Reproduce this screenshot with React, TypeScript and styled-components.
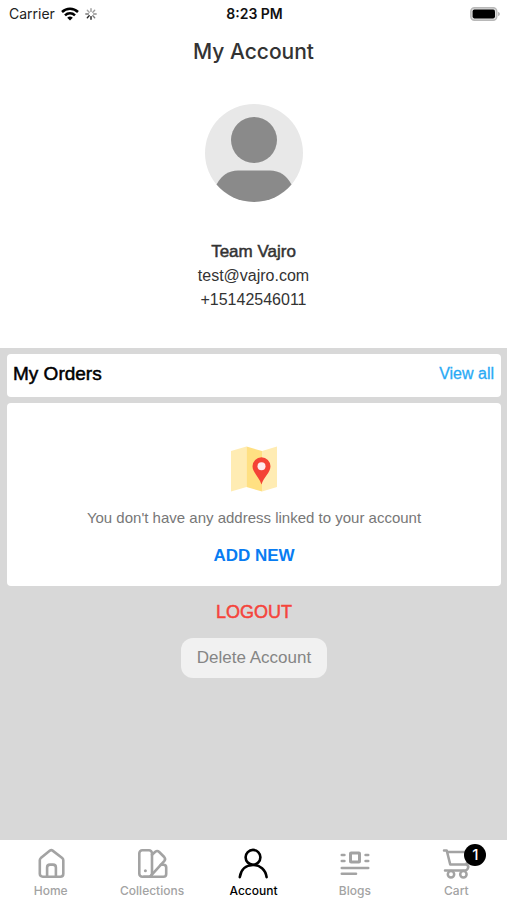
import React from "react";
import styled, { createGlobalStyle } from "styled-components";

const GlobalStyle = createGlobalStyle`
  *, *::before, *::after { box-sizing: border-box; }
  body {
    margin: 0;
    background: #d8d8d8;
    font-family: "Liberation Sans", Arial, sans-serif;
    color: #333;
  }
  h1, h2, p { margin: 0; font-weight: 400; }
  button { font: inherit; border: 0; background: none; padding: 0; cursor: pointer; }
  a { text-decoration: none; }
  svg { display: block; }
`;

const Screen = styled.div`
  display: flex;
  flex-direction: column;
  min-height: 100vh;
`;

const Profile = styled.header`
  display: flex;
  flex-direction: column;
  align-items: center;
  padding-bottom: 36px;
  background: #fff;
`;

const StatusBar = styled.div`
  display: grid;
  grid-template-columns: 1fr auto 1fr;
  align-items: center;
  align-self: stretch;
  height: 27px;
  padding: 0 7px 0 9px;
  font-family: Inter, sans-serif;
  font-size: 14px;
  color: #222;
`;

const Network = styled.div`
  display: flex;
  align-items: center;
  gap: 6px;
`;

const Clock = styled.time`
  font-weight: 600;
  color: #111;
`;

const Battery = styled.div`
  justify-self: end;
`;

const Title = styled.h1`
  font-family: Inter, sans-serif;
  font-size: 21px;
  font-weight: 500;
  line-height: 50px;
`;

const Avatar = styled.div`
  margin: 27px 0 38px;
`;

const Detail = styled.p<{ $strong?: boolean }>`
  font-size: ${(p) => (p.$strong ? 17 : 16)}px;
  line-height: 24px;
  -webkit-text-stroke: ${(p) => (p.$strong ? "0.5px #333" : "0")};
`;

const Content = styled.main`
  display: flex;
  flex: 1;
  flex-direction: column;
  align-items: center;
  gap: 6px;
  padding: 6px 6px 24px 7px;
`;

const OrdersCard = styled.section`
  display: flex;
  align-items: center;
  justify-content: space-between;
  align-self: stretch;
  padding: 0 7px 4px 6px;
  border-radius: 4px;
  background: #fff;
  line-height: 39px;
`;

const OrdersTitle = styled.h2`
  font-size: 19px;
  color: #000;
  -webkit-text-stroke: 0.5px #000;
`;

const ViewAll = styled.a`
  font-size: 16px;
  color: #2aaaf5;
  -webkit-text-stroke: 0.3px #2aaaf5;
`;

const AddressCard = styled.section`
  display: flex;
  flex-direction: column;
  align-items: center;
  align-self: stretch;
  padding: 43px 16px 18px;
  border-radius: 4px;
  background: #fff;
`;

const EmptyText = styled.p`
  margin: 15px 0;
  font-size: 15px;
  line-height: 22px;
  color: #777;
`;

const AddButton = styled.button`
  font-size: 17px;
  font-weight: 700;
  line-height: 24px;
  color: #087cf2;
`;

const LogoutButton = styled.button`
  margin: 8px 0;
  font-size: 18px;
  line-height: 24px;
  color: #f5443b;
  -webkit-text-stroke: 0.5px #f5443b;
`;

const DeleteButton = styled.button`
  padding: 0 16px;
  border-radius: 12px;
  background: #f1f1f1;
  font-size: 17px;
  line-height: 40px;
  color: #858585;
`;

const TabBar = styled.nav`
  display: grid;
  grid-template-columns: repeat(5, 1fr);
  height: 60px;
  padding-top: 7px;
  background: #fff;
`;

const Tab = styled.a<{ $active?: boolean }>`
  display: flex;
  flex-direction: column;
  align-items: center;
  gap: 4px;
  font-family: Inter, sans-serif;
  font-size: 12px;
  font-weight: 500;
  line-height: 16px;
  color: ${(p) => (p.$active ? "#000" : "#a3a3a3")};
`;

const TabIcon = styled.span`
  position: relative;
`;

const Badge = styled.span`
  position: absolute;
  top: -3px;
  left: 24px;
  width: 22px;
  border-radius: 50%;
  background: #000;
  color: #fff;
  font-size: 15px;
  line-height: 22px;
  text-align: center;
`;

const WifiIcon = () => (
  <svg width="18" height="14" viewBox="0 0 18 14" fill="none" stroke="#000" strokeWidth="2.5" aria-hidden="true">
    <path d="M1 5A11.6 11.6 0 0 1 17 5" />
    <path d="M4 8.3A7.2 7.2 0 0 1 14 8.3" />
    <path d="M9 13.6L6.2 10.8A4 4 0 0 1 11.8 10.8Z" fill="#000" stroke="none" />
  </svg>
);

const SpinnerIcon = () => (
  <svg width="12" height="12" viewBox="0 0 12 12" stroke="#222" strokeWidth="1.4" strokeLinecap="round" aria-hidden="true">
    {[0.45, 0.45, 0.5, 0.6, 1, 1, 0.6, 0.4].map((opacity, i) => (
      <path key={i} d="M6 3.4V0.8" opacity={opacity} transform={`rotate(${i * 45} 6 6)`} />
    ))}
  </svg>
);

const BatteryIcon = () => (
  <svg width="30" height="14" viewBox="0 0 30 14" aria-hidden="true">
    <rect x="0.8" y="0.8" width="26" height="12.4" rx="3.6" fill="#ddd" stroke="#b8b8b8" strokeWidth="1.4" />
    <rect x="2.6" y="2.6" width="22.4" height="8.8" rx="1.8" fill="#000" />
    <path d="M28 4.7Q30 5.4 30 7T28 9.3Z" fill="#b8b8b8" />
  </svg>
);

const AvatarIcon = () => (
  <svg width="98" height="98" viewBox="0 0 98 98" role="img" aria-label="Profile picture">
    <circle cx="49" cy="49" r="49" fill="#e8e8e8" />
    <circle cx="49" cy="36" r="23" fill="#8a8a8a" />
    <path d="M11.5 80.5Q19 66.5 33 66.5H65Q79 66.5 86.5 80.5A49 49 0 0 1 11.5 80.5Z" fill="#8a8a8a" />
  </svg>
);

const MapIcon = () => (
  <svg width="46" height="46" viewBox="0 0 46 46" aria-hidden="true">
    <path d="M0 5L15.5 0.5V41L0 45.5Z" fill="#ffecb3" />
    <path d="M15.5 0.5L31 5V45.5L15.5 41Z" fill="#ffe082" />
    <path d="M31 5L46 0.5V41L31 45.5Z" fill="#ffecb3" />
    <path d="M30.5 38.5C28.5 31.5 21.5 26.5 21.5 20.3A9 9 0 0 1 39.5 20.3C39.5 26.5 32.5 31.5 30.5 38.5Z" fill="#f44336" />
    <circle cx="30.5" cy="20.3" r="4" fill="#ffebee" />
  </svg>
);

const LineIcon = ({ width = 2.6, children }: { width?: number; children: React.ReactNode }) => (
  <svg
    width="32"
    height="32"
    viewBox="0 0 32 32"
    fill="none"
    stroke="currentColor"
    strokeWidth={width}
    strokeLinecap="round"
    strokeLinejoin="round"
    aria-hidden="true"
  >
    {children}
  </svg>
);

const HomeIcon = () => (
  <LineIcon>
    <path d="M4.8 13.2Q4.8 12 5.8 11.1L15 3.6Q16.3 2.6 17.6 3.6L27.2 11.1Q28.3 12 28.3 13.2V26.7Q28.3 29.7 25.3 29.7H7.8Q4.8 29.7 4.8 26.7Z" />
    <path d="M12.1 29.5V20.5Q12.1 17.6 15 17.6H18Q20.9 17.6 20.9 20.5V29.5" />
  </LineIcon>
);

const CollectionsIcon = () => (
  <LineIcon>
    <rect x="3.3" y="3.3" width="12.7" height="26.5" rx="3" />
    <path d="M16 7.7L19.3 4.7Q21.3 3.2 23.2 5L28.2 10Q30 12 28.2 14.1L14.5 29.2" />
    <path d="M24.8 17.7H27.5Q30.2 17.7 30.2 20.5V27Q30.2 29.8 27.4 29.8H8" />
    <circle cx="9.4" cy="23.8" r="1.5" fill="currentColor" stroke="none" />
  </LineIcon>
);

const AccountIcon = () => (
  <LineIcon>
    <circle cx="16" cy="10.3" r="7.4" />
    <path d="M2.8 30.2C3.8 22.5 9 18 16 18S28.6 22.5 29.6 30.2" />
  </LineIcon>
);

const BlogsIcon = () => (
  <LineIcon>
    <rect x="11.5" y="6" width="9" height="9" rx="0.6" strokeWidth="3" />
    <path d="M2.8 8H5.4M2.8 14H5.4M26.6 8H29.2M26.6 14H29.2M2.8 21H29.2M2.8 26.8H17" />
  </LineIcon>
);

const CartIcon = () => (
  <LineIcon width={2.5}>
    <path d="M4 3.4H6.7L10.2 17.4H26.6L29.4 5H7.3" />
    <path d="M26.6 17.4Q29.3 19 27.7 21.8Q27 23.5 25 23.5H5" />
    <circle cx="11" cy="27.3" r="3.2" />
    <circle cx="23.4" cy="27.3" r="3.2" />
  </LineIcon>
);

const tabs = [
  { label: "Home", Icon: HomeIcon },
  { label: "Collections", Icon: CollectionsIcon },
  { label: "Account", Icon: AccountIcon, active: true },
  { label: "Blogs", Icon: BlogsIcon },
  { label: "Cart", Icon: CartIcon, count: 1 },
];

export default function App() {
  return (
    <Screen>
      <GlobalStyle />
      <Profile>
        <StatusBar>
          <Network>
            Carrier
            <WifiIcon />
            <SpinnerIcon />
          </Network>
          <Clock>8:23 PM</Clock>
          <Battery>
            <BatteryIcon />
          </Battery>
        </StatusBar>
        <Title>My Account</Title>
        <Avatar>
          <AvatarIcon />
        </Avatar>
        <Detail $strong>Team Vajro</Detail>
        <Detail>test@vajro.com</Detail>
        <Detail>+15142546011</Detail>
      </Profile>
      <Content>
        <OrdersCard>
          <OrdersTitle>My Orders</OrdersTitle>
          <ViewAll href="#orders">View all</ViewAll>
        </OrdersCard>
        <AddressCard>
          <MapIcon />
          <EmptyText>You don't have any address linked to your account</EmptyText>
          <AddButton type="button">ADD NEW</AddButton>
        </AddressCard>
        <LogoutButton type="button">LOGOUT</LogoutButton>
        <DeleteButton type="button">Delete Account</DeleteButton>
      </Content>
      <TabBar aria-label="Main">
        {tabs.map(({ label, Icon, active, count }) => (
          <Tab key={label} href={`#${label.toLowerCase()}`} $active={active} aria-current={active ? "page" : undefined}>
            <TabIcon>
              <Icon />
              {count && <Badge>{count}</Badge>}
            </TabIcon>
            {label}
          </Tab>
        ))}
      </TabBar>
    </Screen>
  );
}
